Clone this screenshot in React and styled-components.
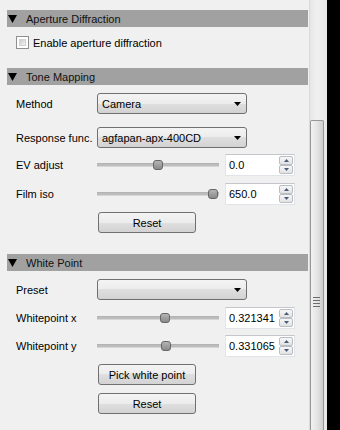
import React from "react";
import styled, { createGlobalStyle } from "styled-components";

const GlobalStyle = createGlobalStyle`
  html, body { margin: 0; padding: 0; background: #000; }
  body {
    font-family: "Liberation Sans", Arial, sans-serif;
    font-size: 11px;
    color: #000;
  }
  #root { width: 340px; height: 430px; }
`;

const Window = styled.div`
  width: 340px;
  height: 430px;
  display: flex;
  overflow: hidden;
  background: #000;
`;

const Panel = styled.div`
  width: 309px;
  flex: none;
  box-sizing: border-box;
  background: #f0f0f0;
  padding: 10px 1px 0 7px;
  display: flex;
  flex-direction: column;
`;

const ScrollTrack = styled.div`
  width: 18px;
  flex: none;
  box-sizing: border-box;
  border-left: 1px solid #dadada;
  background: linear-gradient(to right, #e6e6e6, #f0f0f0 40%, #e8e8e8);
  display: flex;
  flex-direction: column;
  padding-top: 120px;
`;

const Thumb = styled.div`
  width: 14px;
  flex: 1;
  box-sizing: border-box;
  border: 1px solid #979797;
  border-bottom: none;
  border-radius: 2px 2px 0 0;
  background: linear-gradient(to right, #f2f2f2, #e4e4e4 50%, #cfcfcf);
  display: flex;
  flex-direction: column;
  align-items: center;
  padding-top: 175px;
`;

const Grip = styled.svg`
  display: block;
`;

const Edge = styled.div`
  flex: 1;
  background: #000;
`;

const Header = styled.div`
  height: 17px;
  background: #a1a1a1;
  display: flex;
  align-items: center;
  gap: 9px;
  padding-left: 1px;
  margin-top: ${(p) => p.$mt || 0}px;
  color: #111;
`;

const Arrow = styled.svg`
  display: block;
  flex: none;
`;

const CheckRow = styled.label`
  display: flex;
  align-items: center;
  gap: 4px;
  padding-left: 9px;
  margin-top: ${(p) => p.$mt || 0}px;
  height: 13px;
`;

const CheckBox = styled.span`
  width: 13px;
  height: 13px;
  box-sizing: border-box;
  border: 1px solid #8e8f8f;
  background: #fff;
  padding: 2px;
  display: flex;
  &::after {
    content: "";
    flex: 1;
    background: linear-gradient(135deg, #cbcbcb, #f4f4f4);
    border: 1px solid #d2d2d2;
  }
`;

const FormRow = styled.div`
  display: grid;
  grid-template-columns: 81px auto;
  align-items: center;
  padding-left: 9px;
  margin-top: ${(p) => p.$mt || 0}px;
`;

const Label = styled.span`
  white-space: nowrap;
`;

const Combo = styled.div`
  width: 150px;
  height: 21px;
  box-sizing: border-box;
  border: 1px solid #707070;
  border-radius: 3px;
  background: linear-gradient(#f4f4f4, #ececec 50%, #dfdfdf 50%, #d2d2d2);
  display: flex;
  align-items: center;
  justify-content: space-between;
  padding: 0 5px 0 4px;
`;

const SliderLine = styled.div`
  display: flex;
  align-items: center;
  gap: 6px;
`;

const Groove = styled.div`
  width: 122px;
  height: 12px;
  display: flex;
  align-items: center;
  background: linear-gradient(#f0f0f0 4px, #b3b3b3 4px, #b3b3b3 5px, #bcbcbc 5px, #bcbcbc 7px, #d6d6d6 7px, #d6d6d6 8px, #f0f0f0 8px);
`;

const Handle = styled.div`
  width: 10px;
  height: 10px;
  box-sizing: border-box;
  border: 1px solid #666;
  border-radius: 3px;
  background: linear-gradient(#b5b5b5, #8a8a8a);
`;

const Spin = styled.div`
  width: 70px;
  height: 22px;
  box-sizing: border-box;
  border: 1px solid #e1e4e8;
  border-top-color: #c4c6cb;
  background: #fff;
  display: flex;
  align-items: center;
  justify-content: space-between;
  padding: 0 1px 0 3px;
`;

const SpinButtons = styled.div`
  display: flex;
  flex-direction: column;
  gap: 0;
`;

const SpinButton = styled.div`
  width: 14px;
  height: 9px;
  box-sizing: border-box;
  border: 1px solid #b9bdc4;
  border-radius: 2px;
  background: linear-gradient(#f7f7f7, #e2e2e2);
  display: flex;
  align-items: center;
  justify-content: center;
`;

const Button = styled.div`
  width: 98px;
  height: 21px;
  box-sizing: border-box;
  border: 1px solid #707070;
  border-radius: 3px;
  background: linear-gradient(#f4f4f4, #ececec 50%, #dfdfdf 50%, #d3d3d3);
  display: flex;
  align-items: center;
  justify-content: center;
  margin-left: 1px;
`;

const ButtonRow = styled.div`
  padding-left: 90px;
  margin-top: ${(p) => p.$mt || 0}px;
  display: flex;
`;

const Triangle = ({ w = 9, h = 8 }) => (
  <Arrow width={w} height={h} viewBox={`0 0 ${w} ${h}`}>
    <polygon points={`0,0 ${w},0 ${w / 2},${h}`} fill="#000" />
  </Arrow>
);

const SmallTri = ({ up }) => (
  <Arrow width="5" height="3" viewBox="0 0 5 3">
    <polygon points={up ? "0,3 5,3 2.5,0" : "0,0 5,0 2.5,3"} fill="#4a5a78" />
  </Arrow>
);

const Section = ({ title, mt }) => (
  <Header $mt={mt}>
    <Triangle w={9} h={8} />
    <span>{title}</span>
  </Header>
);

const ComboRow = ({ label, value, mt }) => (
  <FormRow $mt={mt}>
    <Label>{label}</Label>
    <Combo>
      <span>{value}</span>
      <Triangle w={7} h={4} />
    </Combo>
  </FormRow>
);

const SliderRow = ({ label, pos, value, mt }) => (
  <FormRow $mt={mt}>
    <Label>{label}</Label>
    <SliderLine>
      <Groove>
        <Handle style={{ marginLeft: `${Math.round(pos * 112)}px` }} />
      </Groove>
      <Spin>
        <span>{value}</span>
        <SpinButtons>
          <SpinButton><SmallTri up /></SpinButton>
          <SpinButton><SmallTri /></SpinButton>
        </SpinButtons>
      </Spin>
    </SliderLine>
  </FormRow>
);

export default function App() {
  return (
    <>
      <GlobalStyle />
      <Window>
        <Panel>
          <Section title="Aperture Diffraction" />
          <CheckRow $mt={9}>
            <CheckBox />
            <span>Enable aperture diffraction</span>
          </CheckRow>

          <Section title="Tone Mapping" mt={19} />
          <ComboRow label="Method" value="Camera" mt={8} />
          <ComboRow label="Response func." value="agfapan-apx-400CD" mt={13} />
          <SliderRow label="EV adjust" pos={0.5} value="0.0" mt={6} />
          <SliderRow label="Film iso" pos={0.99} value="650.0" mt={7} />
          <ButtonRow $mt={7}><Button>Reset</Button></ButtonRow>

          <Section title="White Point" mt={21} />
          <ComboRow label="Preset" value="" mt={8} />
          <SliderRow label="Whitepoint x" pos={0.56} value="0.321341" mt={7} />
          <SliderRow label="Whitepoint y" pos={0.57} value="0.331065" mt={6} />
          <ButtonRow $mt={7}><Button>Pick white point</Button></ButtonRow>
          <ButtonRow $mt={8}><Button>Reset</Button></ButtonRow>
        </Panel>
        <ScrollTrack>
          <Thumb>
            <Grip width="8" height="12" viewBox="0 0 8 12">
              {[1, 4, 7, 10].map((y) => (
                <rect key={y} x="0" y={y} width="7" height="1" fill="#6d6d6d" />
              ))}
            </Grip>
          </Thumb>
        </ScrollTrack>
        <Edge />
      </Window>
    </>
  );
}
